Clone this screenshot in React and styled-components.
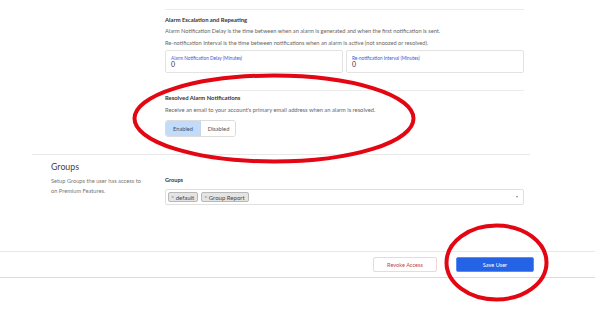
import React from "react";
import styled, { createGlobalStyle } from "styled-components";

const Global = createGlobalStyle`
  html, body { margin: 0; padding: 0; background: #fff; }
  body { font-family: Lato, "Open Sans", sans-serif; color: #333; }
  * { box-sizing: border-box; }
`;

const Page = styled.div`
  position: relative;
  width: 605px;
  height: 310px;
  overflow: hidden;
  background: #fff;
`;

const Container = styled.div`
  margin-left: 32px;
  width: 498px;
`;

const Row = styled.section`
  display: grid;
  grid-template-columns: 114px 359px;
  padding-left: 19px;
  border-top: ${(p) => (p.$bordered ? "1px solid #e8e8e8" : "none")};
  padding-top: ${(p) => p.$pt || 0}px;
  margin-top: ${(p) => p.$mt || 0}px;
`;

const Side = styled.div`
  padding-top: ${(p) => p.$pt || 0}px;
`;

const SideTitle = styled.div`
  font-size: 8.8px;
  line-height: 10px;
  color: #444;
`;

const SideText = styled.p`
  margin: 4px 0 0;
  font-size: 5.7px;
  line-height: 10px;
  color: #777;
`;

const Main = styled.div`
  display: flex;
  flex-direction: column;
`;

const Divider = styled.hr`
  border: 0;
  border-top: 1px solid #ececec;
  margin: ${(p) => p.$mt || 0}px 0 0;
  height: 0;
`;

const Heading = styled.div`
  font-size: 5.85px;
  font-weight: 700;
  line-height: 8px;
  color: #333;
  margin-top: ${(p) => p.$mt || 0}px;
`;

const Desc = styled.div`
  font-size: ${(p) => p.$size || 5.65}px;
  line-height: 8px;
  color: #666;
  margin-top: ${(p) => p.$mt || 0}px;
  white-space: nowrap;
`;

const InputPair = styled.div`
  display: grid;
  grid-template-columns: 1fr 1fr;
  gap: 3px;
  margin-top: 3px;
`;

const Field = styled.div`
  height: 23px;
  border: 1px solid #e3e3e3;
  border-radius: 2px;
  padding: 5px 5px 0;
  display: flex;
  flex-direction: column;
`;

const FieldLabel = styled.span`
  font-size: 4.7px;
  line-height: 5px;
  color: #2f63d6;
`;

const FieldValue = styled.span`
  font-size: 7px;
  line-height: 7px;
  color: #333;
`;

const Toggle = styled.div`
  display: flex;
  margin-top: 6px;
  width: 71px;
  height: 17px;
  border: 1px solid #dcdcdc;
  border-radius: 3px;
  overflow: hidden;
`;

const ToggleBtn = styled.div`
  flex: 0 0 ${(p) => p.$w}px;
  display: flex;
  align-items: center;
  justify-content: center;
  font-size: 5.7px;
  color: ${(p) => (p.$active ? "#3d4e66" : "#555")};
  background: ${(p) => (p.$active ? "#c2dbfb" : "#fff")};
  border-right: ${(p) => (p.$active ? "1px solid #c9d6e8" : "none")};
`;

const FieldTitle = styled.div`
  font-size: 5.6px;
  font-weight: 700;
  line-height: 8px;
  color: #333;
  margin-top: 21px;
`;

const Select = styled.div`
  margin-top: 5px;
  height: 16px;
  border: 1px solid #e0e0e0;
  border-radius: 2px;
  display: flex;
  align-items: center;
  gap: 3px;
  padding: 0 2px;
`;

const Chip = styled.span`
  display: inline-flex;
  align-items: center;
  height: 10px;
  padding: 0 3px 0 2px;
  background: #e4e4e4;
  border: 1px solid #b8b8b8;
  border-radius: 2px;
  font-size: 6px;
  color: #444;
  gap: 1.5px;
`;

const ChipX = styled.span`
  color: #888;
  font-size: 5.4px;
`;

const Caret = styled.span`
  margin-left: auto;
  margin-right: 3px;
  width: 0;
  height: 0;
  border-left: 1.5px solid transparent;
  border-right: 1.5px solid transparent;
  border-top: 2px solid #888;
`;

const Footer = styled.footer`
  margin-top: 46px;
  width: 595px;
  border-top: 1px solid #e8e8e8;
  border-bottom: 1px solid #dcdcdc;
  padding: 5px 61px 5px 0;
  display: flex;
  justify-content: flex-end;
  gap: 19px;
`;

const Button = styled.button`
  width: ${(p) => p.$w}px;
  height: 15px;
  font-family: Lato, sans-serif;
  font-size: 5.6px;
  border-radius: 2px;
  padding: 0;
  cursor: pointer;
  color: ${(p) => (p.$primary ? "#fff" : "#c2464a")};
  background: ${(p) => (p.$primary ? "#2563e6" : "#fff")};
  border: 1px solid ${(p) => (p.$primary ? "#5b8df0" : "#f6d3d5")};
`;

const Annotations = styled.svg`
  position: absolute;
  left: 0;
  top: 0;
  pointer-events: none;
`;

export default function App() {
  return (
    <Page>
      <Global />
      <Container>
        <Row $pt={9}>
          <div />
          <Main>
            <Divider />
            <Heading $mt={6}>Alarm Escalation and Repeating</Heading>
            <Desc $mt={3}>
              Alarm Notification Delay is the time between when an alarm is generated and when the first notification is sent.
            </Desc>
            <Desc $mt={4}>
              Re-notification Interval is the time between notifications when an alarm is active (not snoozed or resolved).
            </Desc>
            <InputPair>
              <Field>
                <FieldLabel>Alarm Notification Delay (Minutes)</FieldLabel>
                <FieldValue>0</FieldValue>
              </Field>
              <Field>
                <FieldLabel>Re-notification Interval (Minutes)</FieldLabel>
                <FieldValue>0</FieldValue>
              </Field>
            </InputPair>
            <Divider $mt={17} />
            <Heading $mt={3}>Resolved Alarm Notifications</Heading>
            <Desc $mt={4} $size={5.75}>
              Receive an email to your account's primary email address when an alarm is resolved.
            </Desc>
            <Toggle>
              <ToggleBtn $active $w={35}>Enabled</ToggleBtn>
              <ToggleBtn $w={35}>Disabled</ToggleBtn>
            </Toggle>
          </Main>
        </Row>
        <Row $bordered $mt={17}>
          <Side $pt={7}>
            <SideTitle>Groups</SideTitle>
            <SideText>
              Setup Groups the user has access to
              <br />
              on Premium Features.
            </SideText>
          </Side>
          <Main>
            <FieldTitle>Groups</FieldTitle>
            <Select>
              <Chip>
                <ChipX>×</ChipX>default
              </Chip>
              <Chip>
                <ChipX>×</ChipX>Group Report
              </Chip>
              <Caret />
            </Select>
          </Main>
        </Row>
      </Container>
      <Footer>
        <Button $w={64}>Revoke Access</Button>
        <Button $primary $w={78}>Save User</Button>
      </Footer>
      <Annotations width="605" height="310" viewBox="0 0 605 310">
        <ellipse cx="274" cy="118.5" rx="139.5" ry="43" fill="none" stroke="#e30613" strokeWidth="4" />
        <ellipse cx="496.5" cy="262.5" rx="50" ry="37" fill="none" stroke="#e30613" strokeWidth="4" />
      </Annotations>
    </Page>
  );
}
